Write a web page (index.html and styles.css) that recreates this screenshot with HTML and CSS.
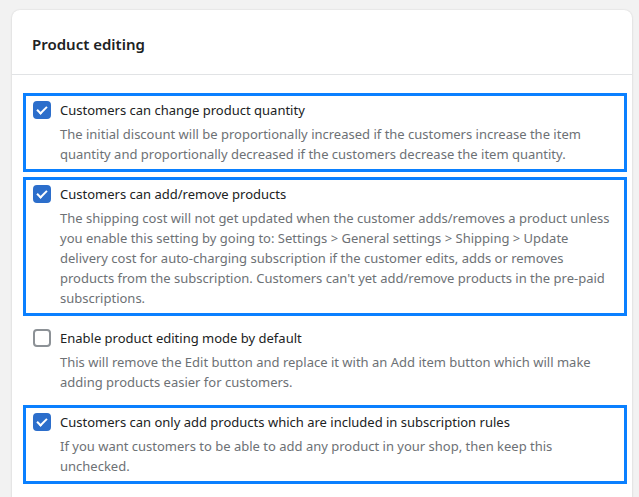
FILE: index.html
```html
<!DOCTYPE html>
<html lang="en">
<head>
  <meta charset="UTF-8">
  <meta name="viewport" content="width=device-width, initial-scale=1.0">
  <title>Product editing</title>
  <link rel="stylesheet" href="styles.css">
</head>
<body>
  <div class="card">
    <div class="card-header">
      <h2>Product editing</h2>
    </div>
    <div class="card-body">
      <div class="option highlight">
        <label class="check">
          <input type="checkbox" checked>
          <span class="box"></span>
          <span class="label-text">Customers can change product quantity</span>
        </label>
        <p class="help">The initial discount will be proportionally increased if the customers increase the item quantity and proportionally decreased if the customers decrease the item quantity.</p>
      </div>
      <div class="option highlight">
        <label class="check">
          <input type="checkbox" checked>
          <span class="box"></span>
          <span class="label-text">Customers can add/remove products</span>
        </label>
        <p class="help">The shipping cost will not get updated when the customer adds/removes a product unless you enable this setting by going to: Settings &gt; General settings &gt; Shipping &gt; Update delivery cost for auto-charging subscription if the customer edits, adds or removes products from the subscription. Customers can't yet add/remove products in the pre-paid subscriptions.</p>
      </div>
      <div class="option">
        <label class="check">
          <input type="checkbox">
          <span class="box"></span>
          <span class="label-text">Enable product editing mode by default</span>
        </label>
        <p class="help">This will remove the Edit button and replace it with an Add item button which will make adding products easier for customers.</p>
      </div>
      <div class="option highlight">
        <label class="check">
          <input type="checkbox" checked>
          <span class="box"></span>
          <span class="label-text">Customers can only add products which are included in subscription rules</span>
        </label>
        <p class="help">If you want customers to be able to add any product in your shop, then keep this unchecked.</p>
      </div>
      <div class="option">
        <label class="check">
          <input type="checkbox" checked>
          <span class="box"></span>
        </label>
      </div>
    </div>
  </div>
</body>
</html>
```

FILE: styles.css
```css
body {
  margin: 0;
  background: #f2f2f2;
  font-family: "Noto Sans", "Open Sans", Arial, sans-serif;
  color: #202223;
  overflow: hidden;
}

.card {
  margin: 10px 7px 0 12px;
  background: #fff;
  border-radius: 8px;
  box-shadow: 0 0 2px rgba(0, 0, 0, 0.12), 0 1px 3px rgba(0, 0, 0, 0.06);
  height: 600px;
}

.card-header {
  padding: 22px 20px 18px;
  border-bottom: 1px solid #e1e3e5;
}

.card-header h2 {
  margin: 0;
  font-size: 15px;
  line-height: 24px;
  font-weight: 600;
}

.card-body {
  padding: 18px 5px 0 11px;
}

.option {
  border: 3px solid transparent;
  padding: 4px 10px 5px 7px;
  margin-bottom: 5px;
}

.option.highlight {
  border-color: #0a80ff;
}

.check {
  display: flex;
  align-items: center;
  gap: 9px;
  height: 20px;
  font-size: 13px;
  line-height: 20px;
}

.check input {
  display: none;
}

.box {
  width: 18px;
  height: 18px;
  box-sizing: border-box;
  border: 2px solid #8c9196;
  border-radius: 4px;
  flex-shrink: 0;
  position: relative;
}

.check input:checked + .box {
  background: #2c6ecb;
  border-color: #2c6ecb;
}

.check input:checked + .box::after {
  content: "";
  position: absolute;
  left: 4px;
  top: 1px;
  width: 4px;
  height: 8px;
  border: solid #fff;
  border-width: 0 2px 2px 0;
  transform: rotate(45deg);
}

.help {
  margin: 4px 0 0 27px;
  font-size: 13px;
  line-height: 20px;
  color: #6d7175;
}
```
